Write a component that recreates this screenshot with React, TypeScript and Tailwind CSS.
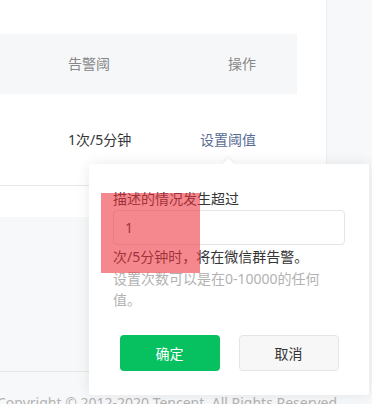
export default function App() {
  return (
    <div
      className="relative h-[404px] w-[372px] overflow-hidden bg-[#f7f8fa] text-[14px] text-[#353535]"
      style={{ fontFamily: '"Noto Sans", "Noto Sans CJK SC", sans-serif' }}
    >
      <div className="flex">
        <div className="w-[327px] shrink-0">
          {/* table card */}
          <div className="h-[217px] border-r border-[#eceef1] bg-white pt-[34px]">
            <div className="w-[297px]">
              <div className="flex h-[60px] items-center justify-between bg-[#f6f7f9] pl-[68px] pr-[41px] leading-[22px] text-[#888888]">
                <span>告警阈</span>
                <span>操作</span>
              </div>
              <div className="flex h-[92px] items-center justify-between border-b border-[#e6e6e6] pl-[68px] pr-[41px] leading-[22px]">
                <span>1次/5分钟</span>
                <span className="text-[#576b95]">设置阈值</span>
              </div>
            </div>
          </div>
          <div className="h-[155px] border-b border-[#e5e5e5]" />
        </div>
        <div className="flex-1" />
      </div>

      <p className="-ml-[3px] mt-[20px] whitespace-nowrap leading-[22px] text-[#b2b2b2]">
        Copyright © 2012-2020 Tencent. All Rights Reserved
      </p>

      {/* popover */}
      <div className="absolute left-[89px] top-[164px] w-[280px] rounded-[2px] bg-white px-[24px] pb-[24px] pt-[24px] shadow-[0_0_14px_rgba(0,0,0,0.09)]">
        <span className="absolute left-[135px] top-[-4px] h-[9px] w-[9px] rotate-45 bg-white shadow-[-2px_-2px_3px_rgba(0,0,0,0.04)]" />
        <p className="leading-[22px]">描述的情况发生超过</p>
        <div className="flex h-[35px] items-center rounded-[4px] border border-[#e5e5e5] px-[11px]">
          <span>1</span>
        </div>
        <p className="mt-[1px] leading-[22px]">次/5分钟时，将在微信群告警。</p>
        <p className="leading-[21px] text-[#b2b2b2]">设置次数可以是在0-10000的任何值。</p>
        <div className="mt-[25px] flex justify-center gap-[19px]">
          <button
            type="button"
            className="h-[36px] w-[100px] rounded-[4px] bg-[#07c160] text-white"
          >
            确定
          </button>
          <button
            type="button"
            className="h-[36px] w-[100px] rounded-[4px] border border-[#e5e5e5] bg-[#f7f7f7] text-[#353535]"
          >
            取消
          </button>
        </div>
      </div>

      {/* highlight */}
      <div className="absolute left-[101px] top-[193px] h-[80px] w-[99px] bg-[rgba(236,50,60,0.58)]" />
    </div>
  );
}
